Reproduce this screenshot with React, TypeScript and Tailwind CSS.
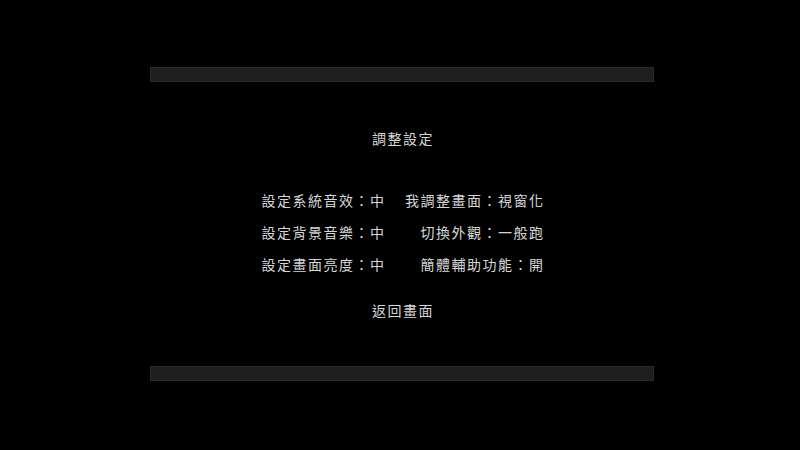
import React from "react";

const rows: [string, string][] = [
  ["設定系統音效：中", "我調整畫面：視窗化"],
  ["設定背景音樂：中", "切換外觀：一般跑"],
  ["設定畫面亮度：中", "簡體輔助功能：開"],
];

export default function App() {
  return (
    <div
      className="w-[800px] h-[450px] bg-black overflow-hidden text-[#d6d6d6] text-[14px] leading-[16px] tracking-[1.5px]"
      style={{ fontFamily: '"Noto Sans CJK TC", "Noto Sans CJK SC", sans-serif' }}
    >
      <div className="ml-[150px] w-[504px] pt-[67px] flex flex-col">
        <div className="h-[15px] bg-[#1e1e1e] border border-[#2a2a2a]" />
        <div className="mt-[48px] text-center pl-[2px]">調整設定</div>
        <div className="mt-[46px] mx-auto w-[285px] pl-[2px] flex flex-col gap-[16px]">
          {rows.map(([l, r]) => (
            <div key={l} className="flex justify-between">
              <span>{l}</span>
              <span>{r}</span>
            </div>
          ))}
        </div>
        <div className="mt-[30px] text-center pl-[2px]">返回畫面</div>
        <div className="mt-[48px] h-[15px] bg-[#1e1e1e] border border-[#2a2a2a]" />
      </div>
    </div>
  );
}
